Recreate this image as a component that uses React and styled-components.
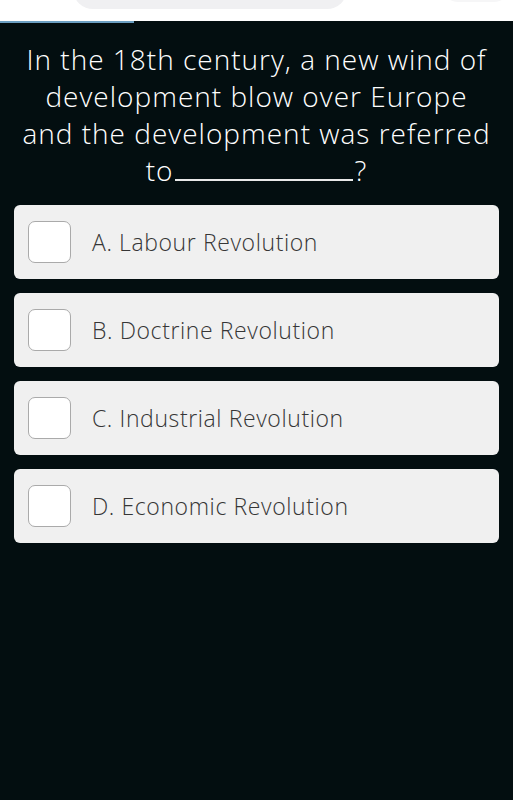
import React from 'react'
import styled, { createGlobalStyle } from 'styled-components'

const options = [
  'A. Labour Revolution',
  'B. Doctrine Revolution',
  'C. Industrial Revolution',
  'D. Economic Revolution',
]

const App = () => {
  return (
    <>
      <Global />
      <Page>
        <Header>
          <Pill />
          <SidePill />
        </Header>
        <Track>
          <Progress style={{ width: 134 }} />
        </Track>
        <Question>
          In the 18th century, a new wind of<br />
          development blow over Europe<br />
          and the development was referred<br />
          to<Blank />?
        </Question>
        <Options>
          {options.map((o) => (
            <Option key={o}>
              <Check />
              <Label>{o}</Label>
            </Option>
          ))}
        </Options>
      </Page>
    </>
  )
}

export default App

const Global = createGlobalStyle`
body{
  margin:0;
  background:#030e10;
  font-family:"Open Sans", Lato, sans-serif;
}
`
const Page = styled.div`
min-height:800px;
background:#030e10;
`
const Header = styled.div`
height:21px;
background:#fff;
overflow:hidden;
display:flex;
align-items:flex-end;
padding-left:73px;
`
const Pill = styled.div`
width:295px;
height:40px;
margin-bottom:12px;
border-radius:20px;
background:#f0f0f2;
`
const SidePill = styled.div`
width:80px;
height:40px;
margin-left:92px;
margin-bottom:19px;
border-radius:20px;
background:#f6f6f7;
`
const Track = styled.div`
height:2px;
`
const Progress = styled.div`
height:2px;
background:#6c9fc2;
`
const Question = styled.div`
color:#fff;
font-size:28px;
font-weight:300;
letter-spacing:1px;
line-height:37px;
text-align:center;
white-space:nowrap;
padding:18px 0 0;
`
const Blank = styled.span`
display:inline-block;
width:178px;
height:26px;
margin:0 2px 0 1px;
border-bottom:2px solid #e8e8e8;
vertical-align:baseline;
`
const Options = styled.div`
display:flex;
flex-direction:column;
gap:14px;
margin:16px 14px 0;
`
const Option = styled.div`
height:74px;
box-sizing:border-box;
background:#f0f0f0;
border-radius:6px;
display:flex;
align-items:center;
padding-left:14px;
`
const Check = styled.div`
width:43px;
height:42px;
box-sizing:border-box;
background:#fff;
border:1px solid #aaa;
border-radius:7px;
flex-shrink:0;
`
const Label = styled.span`
margin-left:21px;
color:#363636;
font-size:23px;
font-weight:300;
letter-spacing:0.6px;
`
